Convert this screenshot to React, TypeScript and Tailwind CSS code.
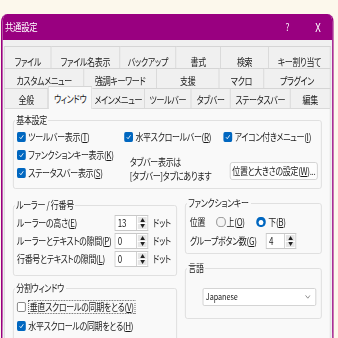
import React from "react";

function K({ t, k, tail }: { t: string; k: string; tail?: string }) {
  return (
    <span className="whitespace-nowrap">
      {t}(<span className="underline underline-offset-[1px]">{k}</span>){tail}
    </span>
  );
}

function Check({ checked }: { checked: boolean }) {
  return checked ? (
    <span className="w-[11px] h-[10px] rounded-[2px] bg-[#0067c0] flex items-center justify-center shrink-0">
      <svg viewBox="0 0 10 10" className="w-[9px] h-[8px]">
        <path d="M2.2 5.3 L4.2 7.2 L8 2.8" fill="none" stroke="white" strokeWidth="1.2" />
      </svg>
    </span>
  ) : (
    <span className="w-[11px] h-[10px] rounded-[2px] bg-white border border-[#7a7a7a] shrink-0" />
  );
}

function Radio({ on }: { on: boolean }) {
  return on ? (
    <span className="w-[12px] h-[10px] rounded-full bg-[#0067c0] flex items-center justify-center shrink-0">
      <span className="w-[6px] h-[5px] rounded-full bg-white" />
    </span>
  ) : (
    <span className="w-[12px] h-[10px] rounded-full border border-[#8a8a8a] bg-[#f5f5f5] shrink-0" />
  );
}

function Spin({ v, w }: { v: string; w: string }) {
  return (
    <div className="flex h-[16px]">
      <div className={`${w} h-full bg-white border border-[#c8c8c8] pl-[3px] flex items-center`}>{v}</div>
      <div className="w-[14px] h-full flex flex-col border border-l-0 border-[#c8c8c8] bg-white p-px gap-px">
        <div className="flex-1 bg-[#e6e6e6] flex items-center justify-center">
          <svg viewBox="0 0 6 4" className="w-[6px] h-[4px]"><path d="M0 4 L3 0 L6 4 Z" fill="#222" /></svg>
        </div>
        <div className="flex-1 bg-[#e6e6e6] flex items-center justify-center">
          <svg viewBox="0 0 6 4" className="w-[6px] h-[4px]"><path d="M0 0 L3 4 L6 0 Z" fill="#222" /></svg>
        </div>
      </div>
    </div>
  );
}

const row1: [string, string][] = [
  ["ファイル", "w-[59px]"],
  ["ファイル名表示", "w-[86px]"],
  ["バックアップ", "w-[70px]"],
  ["書式", "w-[56px]"],
  ["検索", "w-[60px]"],
  ["キー割り当て", "w-[77px]"],
];
const row2: [string, string][] = [
  ["カスタムメニュー", "w-[100px]"],
  ["強調キーワード", "w-[91px]"],
  ["支援", "w-[78px]"],
  ["マクロ", "w-[56px]"],
  ["プラグイン", "w-[83px]"],
];
const row3: [string, string][] = [
  ["全般", "w-[55px]"],
  ["ウィンドウ", "w-[55px]"],
  ["メインメニュー", "w-[66px]"],
  ["ツールバー", "w-[58px]"],
  ["タブバー", "w-[49px]"],
  ["ステータスバー", "w-[75px]"],
  ["編集", "w-[50px]"],
];

export default function App() {
  return (
    <div className="w-[338px] h-[338px] overflow-hidden bg-[#fcf8ec] pl-px pt-[14px] font-['Noto_Sans_CJK_JP',sans-serif] [font-feature-settings:'palt'] text-[10px] tracking-[-0.4px] leading-[14px] text-[#1a1a1a]">
      <div className="w-[416px] h-[330px] origin-top-left [transform:scaleX(0.8)] rounded-t-[8px] overflow-hidden border-x-2 border-[#990080] bg-[#f0f0f0]">
        <div className="h-[26px] bg-[#990080] text-white flex items-center pl-[3px] text-[10.5px]">
          <span>共通設定</span>
          <span className="ml-auto w-[40px] text-center">?</span>
          <span className="w-[36px] text-center text-[12px]">X</span>
        </div>
        <div className="px-[2px] pt-[6px]">
          <div className="flex h-[22px]">
            {row1.map(([t, w], i) => (
              <div key={t} className={`${w} border-t border-r border-[#d5d5d5] ${i === 0 ? "border-l" : ""} text-center pt-[8px]`}>{t}</div>
            ))}
          </div>
          <div className="flex h-[20px]">
            {row2.map(([t, w], i) => (
              <div key={t} className={`${w} border-t border-r border-[#d5d5d5] ${i === 0 ? "border-l" : ""} text-center pt-[5px]`}>{t}</div>
            ))}
          </div>
          <div className="flex h-[20px]">
            {row3.map(([t, w], i) =>
              i === 1 ? (
                <div key={t} className={`${w} relative z-10 -mt-[2px] h-[23px] bg-[#f9f9f9] border-t border-x border-[#d5d5d5] text-center pt-[5px]`}>{t}</div>
              ) : (
                <div key={t} className={`${w} border-t ${i === 0 ? "border-x" : "border-r"} border-[#d5d5d5] text-center pt-[4px]`}>{t}</div>
              )
            )}
          </div>
          <div className="border border-[#d9d9d9] bg-[#f9f9f9] h-[240px] px-[10px] pt-[4px]">
            <fieldset className="h-[76px] border border-[#dcdcdc] rounded-[3px]">
              <legend className="ml-[1px] px-[2px] leading-[14px]">基本設定</legend>
              <div className="flex pl-[4px] mt-[1px]">
                <div className="w-[134px] flex flex-col">
                  <div className="h-[18px] flex items-center gap-[3px]"><Check checked /><K t="ツールバー表示" k="T" /></div>
                  <div className="h-[18px] flex items-center gap-[3px]"><Check checked /><K t="ファンクションキー表示" k="K" /></div>
                  <div className="h-[18px] flex items-center gap-[3px]"><Check checked /><K t="ステータスバー表示" k="S" /></div>
                </div>
                <div className="w-[124px] flex flex-col">
                  <div className="h-[18px] flex items-center gap-[3px]"><Check checked /><K t="水平スクロールバー" k="R" /></div>
                  <div className="ml-[7px] mt-[9px] leading-[14px]">
                    <div>タブバー表示は</div>
                    <div className="whitespace-nowrap">[タブバー]タブにあります</div>
                  </div>
                </div>
                <div className="flex-1 flex flex-col">
                  <div className="h-[18px] flex items-center gap-[3px]"><Check checked /><K t="アイコン付きメニュー" k="I" /></div>
                  <div className="ml-[8px] mt-[16px] w-[110px] h-[18px] border border-[#cfcfcf] bg-[#fdfdfd] rounded-[3px] flex items-center justify-center">
                    <K t="位置と大きさの設定" k="W" tail="..." />
                  </div>
                </div>
              </div>
            </fieldset>
            <div className="flex gap-[10px]">
              <div className="w-[205px] flex flex-col">
                <fieldset className="mt-[9px] h-[78px] border border-[#dcdcdc] rounded-[3px]">
                  <legend className="ml-[1px] px-[2px] leading-[14px]">ルーラー / 行番号</legend>
                  <div className="mt-[2px] flex flex-col pl-[4px]">
                    <div className="h-[18px] flex items-center">
                      <span className="w-[122px]"><K t="ルーラーの高さ" k="E" /></span>
                      <Spin v="13" w="w-[28px]" />
                      <span className="ml-[6px]">ドット</span>
                    </div>
                    <div className="h-[18px] flex items-center">
                      <span className="w-[122px]"><K t="ルーラーとテキストの隙間" k="P" /></span>
                      <Spin v="0" w="w-[28px]" />
                      <span className="ml-[6px]">ドット</span>
                    </div>
                    <div className="h-[18px] flex items-center">
                      <span className="w-[122px]"><K t="行番号とテキストの隙間" k="L" /></span>
                      <Spin v="0" w="w-[28px]" />
                      <span className="ml-[6px]">ドット</span>
                    </div>
                  </div>
                </fieldset>
                <fieldset className="mt-[5px] h-[70px] border border-[#dcdcdc] rounded-[3px]">
                  <legend className="ml-[1px] px-[2px] leading-[14px]">分割ウィンドウ</legend>
                  <div className="mt-[3px] flex flex-col pl-[4px]">
                    <div className="h-[18px] flex items-center gap-[3px]">
                      <Check checked={false} />
                      <span className="border border-dotted border-[#555] px-px leading-[12px]"><K t="垂直スクロールの同期をとる" k="V" /></span>
                    </div>
                    <div className="h-[19px] flex items-center gap-[3px]"><Check checked /><K t="水平スクロールの同期をとる" k="H" /></div>
                  </div>
                </fieldset>
              </div>
              <div className="w-[171px] flex flex-col">
                <fieldset className="mt-[7px] h-[58px] border border-[#dcdcdc] rounded-[3px]">
                  <legend className="ml-[1px] px-[2px] leading-[14px]">ファンクションキー</legend>
                  <div className="mt-[3px] flex flex-col pl-[5px]">
                    <div className="h-[18px] flex items-center">
                      <span className="w-[33px]">位置</span>
                      <span className="w-[50px] flex items-center gap-px"><Radio on={false} /><K t="上" k="O" /></span>
                      <span className="flex items-center gap-[3px]"><Radio on /><K t="下" k="B" /></span>
                    </div>
                    <div className="h-[18px] mt-px flex items-center">
                      <span className="w-[95px]"><K t="グループボタン数" k="G" /></span>
                      <Spin v="4" w="w-[24px]" />
                    </div>
                  </div>
                </fieldset>
                <fieldset className="mt-[7px] h-[58px] border border-[#dcdcdc] rounded-[3px]">
                  <legend className="ml-[1px] px-[2px] leading-[14px]">言語</legend>
                  <div className="mt-[13px] ml-[21px] w-[142px] h-[18px] border border-[#cfcfcf] bg-white rounded-[2px] flex items-center pl-[3px] text-[9px] tracking-normal">
                    <span>Japanese</span>
                    <svg viewBox="0 0 8 5" className="ml-auto mr-[6px] w-[7px] h-[4px]"><path d="M0.5 0.5 L4 4 L7.5 0.5" fill="none" stroke="#666" strokeWidth="1" /></svg>
                  </div>
                </fieldset>
              </div>
            </div>
          </div>
        </div>
      </div>
    </div>
  );
}
